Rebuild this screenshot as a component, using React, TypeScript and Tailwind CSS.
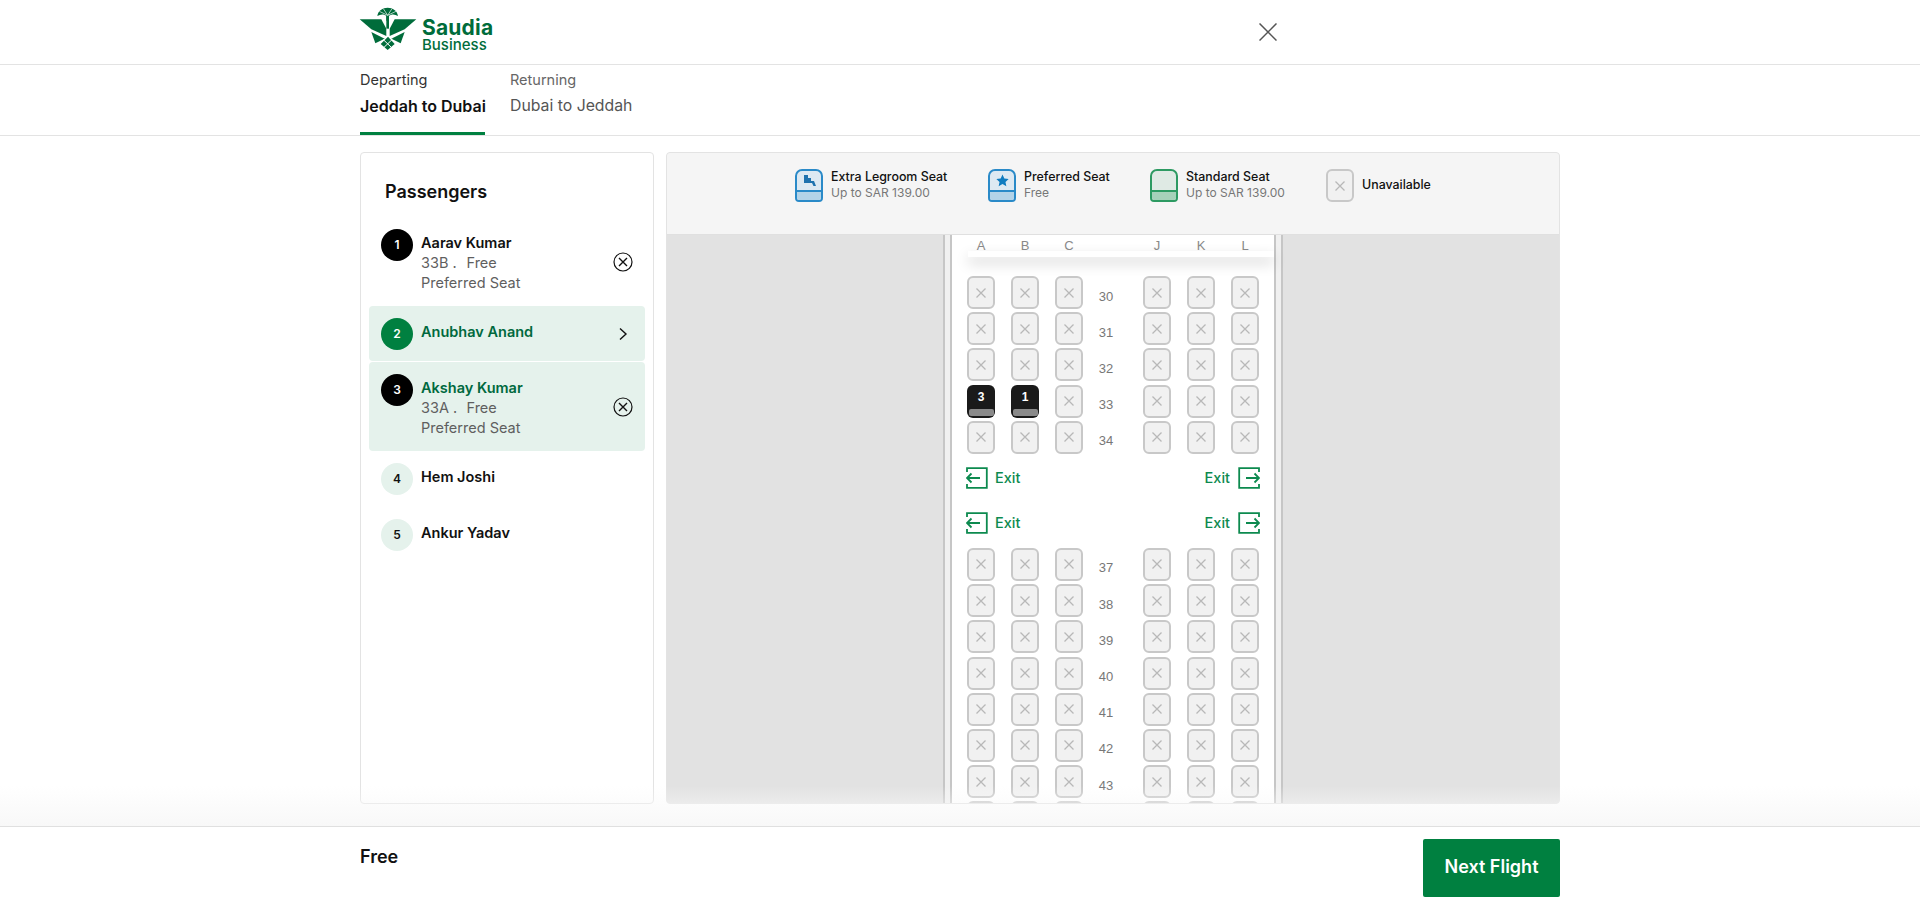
import React from "react";

const font = { fontFamily: "Inter, 'Liberation Sans', sans-serif" };
const arial = { fontFamily: "'Liberation Sans', sans-serif" };

function Logo() {
  return (
    <div className="flex items-start">
      <svg width="60" height="46" viewBox="0 0 180 138" className="-ml-[2px] -mt-[3px] shrink-0">
        <g fill="#006c3b">
          <path d="M58 30 C60 14 74 5 89 5 C104 5 118 14 120 30 C110 24 100 24 93 30 L93 44 L85 44 L85 30 C78 24 68 24 58 30 Z" />
          <rect x="85" y="30" width="8" height="38" />
          <path d="M5 40 L70 40 L85 68 L85 90 L40 70 Z" />
          <path d="M175 40 L110 40 L95 68 L95 90 L140 70 Z" />
          <path d="M40 78 L80 98 L52 112 Z" />
          <path d="M140 78 L100 98 L128 112 Z" />
          <path d="M90 92 L68 114 L89 132 L110 114 Z" />
        </g>
        <path d="M89 28 L64 16 M89 28 L76 8 M89 28 L102 8 M89 28 L114 16" stroke="#fff" strokeWidth="2" fill="none" />
        <path d="M75 100 L102 126 M103 100 L76 126" stroke="#fff" strokeWidth="3" />
      </svg>
      <div className="ml-1 mt-[10px] flex flex-col text-[#006c3b]">
        <span className="text-[21px] leading-[18px] font-bold tracking-[0.2px]">Saudia</span>
        <span className="text-[15px] leading-4 font-medium">Business</span>
      </div>
    </div>
  );
}

function CircleX() {
  return (
    <svg width="20" height="20" viewBox="0 0 20 20" fill="none" stroke="#111" strokeWidth="1.2">
      <circle cx="10" cy="10" r="9" />
      <path d="M6 6 L14 14 M14 6 L6 14" strokeWidth="1.4" />
    </svg>
  );
}

function Passenger({
  n,
  name,
  seat,
  tone,
  active,
  action,
  cls,
}: {
  n: number;
  name: string;
  seat?: string;
  tone: "black" | "green" | "pale";
  active?: boolean;
  action?: "x" | "chev";
  cls: string;
}) {
  const circle =
    tone === "black"
      ? "bg-black text-white"
      : tone === "green"
        ? "bg-[#008040] text-white"
        : "bg-[#e5f2ec] text-[#111]";
  return (
    <div className={`flex rounded-[4px] px-3 ${cls}`}>
      <div className={`mt-3 flex h-8 w-8 shrink-0 items-center justify-center rounded-full text-[12px] font-semibold ${circle}`}>
        {n}
      </div>
      <div className="ml-2 mt-4 flex-1">
        <div className={`text-[14.5px] leading-5 font-semibold ${active ? "text-[#00693e]" : "text-[#111]"}`}>{name}</div>
        {seat && (
          <div className="text-[14.5px] leading-5 text-[#5f5f5f]">
            <div className="flex">
              <span className="w-[45.5px] shrink-0 whitespace-nowrap">{seat} .</span>
              <span>Free</span>
            </div>
            <div>Preferred Seat</div>
          </div>
        )}
      </div>
      {action === "x" && (
        <div className="mt-[35px]">
          <CircleX />
        </div>
      )}
      {action === "chev" && (
        <svg width="20" height="20" viewBox="0 0 20 20" fill="none" stroke="#111" strokeWidth="1.4" className="mt-[18px]">
          <path d="M7 4.5 L13 10 L7 15.5" />
        </svg>
      )}
    </div>
  );
}

function LegendSeat({ border, fill, base, children }: { border: string; fill: string; base: string; children?: React.ReactNode }) {
  return (
    <div className={`flex h-[33px] w-[28px] shrink-0 flex-col overflow-hidden rounded-t-[7px] rounded-b-[4px] border-2 ${border} ${fill}`}>
      <div className="flex flex-1 items-center justify-center">{children}</div>
      <div className={`h-[10px] border-t-2 ${border} ${base}`} />
    </div>
  );
}

function Legend({ title, sub, seat, cls }: { title: string; sub: string; seat: React.ReactNode; cls: string }) {
  return (
    <div className={`flex items-start gap-2 ${cls}`}>
      {seat}
      <div className="text-[12px] leading-4">
        <div className="text-[12.4px] font-medium whitespace-nowrap text-[#111]">{title}</div>
        <div className="whitespace-nowrap text-[#777]">{sub}</div>
      </div>
    </div>
  );
}

function SeatX() {
  return (
    <div className="flex h-[33px] w-[28px] items-center justify-center rounded-[6px] border-2 border-[#c8c8c8] bg-[#f1f1f1]">
      <svg width="12" height="12" viewBox="0 0 12 12" stroke="#b8b8b8" strokeWidth="1.3">
        <path d="M1.5 1.5 L10.5 10.5 M10.5 1.5 L1.5 10.5" />
      </svg>
    </div>
  );
}

function SeatTaken({ n }: { n: number }) {
  return (
    <div className="flex h-[33px] w-[28px] flex-col items-center rounded-[6px] bg-[#1a1a1a] p-[1px]">
      <div className="flex-1 pt-[1px] text-[12px] leading-5 font-bold text-white" style={arial}>
        {n}
      </div>
      <div className="mb-[1px] h-[7px] w-[25px] rounded-[2px] bg-[#8a8a8a]" />
    </div>
  );
}

function Row({ n, taken }: { n?: number; taken?: Record<number, number> }) {
  return (
    <div className="flex h-[36.2px] shrink-0">
      <div className="flex gap-4">
        {[0, 1, 2].map((i) => (
          <div key={i}>{taken && taken[i] ? <SeatTaken n={taken[i]} /> : <SeatX />}</div>
        ))}
      </div>
      <div className="mr-[14px] w-[46px] pt-[13.5px] text-center text-[13px] leading-[14px] text-[#777]" style={arial}>
        {n}
      </div>
      <div className="flex gap-4">
        {[0, 1, 2].map((i) => (
          <SeatX key={i} />
        ))}
      </div>
    </div>
  );
}

function ExitIcon({ flip }: { flip?: boolean }) {
  return (
    <svg width="22" height="22" viewBox="0 0 22 22" fill="none" stroke="#0d8a4f" strokeWidth="1.8" className={flip ? "-scale-x-100" : ""}>
      <path d="M1 5 V1.2 H20.8 V20.8 H1 V17" />
      <path d="M1 11 H14 M5.5 6.5 L1 11 L5.5 15.5" />
    </svg>
  );
}

function ExitRow({ cls }: { cls: string }) {
  return (
    <div className={`-ml-[1px] flex w-[294px] items-center justify-between ${cls}`}>
      <div className="flex items-center gap-[7px]">
        <ExitIcon />
        <span className="text-[14.5px] font-medium text-[#0d8a4f]">Exit</span>
      </div>
      <div className="flex items-center gap-2">
        <span className="text-[14.5px] font-medium text-[#0d8a4f]">Exit</span>
        <ExitIcon flip />
      </div>
    </div>
  );
}

export default function App() {
  return (
    <div className="relative flex h-[911px] w-full flex-col overflow-hidden bg-white" style={font}>
      <header className="flex h-[65px] shrink-0 justify-center border-b border-[#e3e3e3]">
        <div className="flex w-[1200px] items-start pt-[9px]">
          <Logo />
          <svg width="18" height="18" viewBox="0 0 18 18" stroke="#555" strokeWidth="1.5" className="mr-[283px] ml-auto mt-[14px]">
            <path d="M0.5 0.5 L17.5 17.5 M17.5 0.5 L0.5 17.5" />
          </svg>
        </div>
      </header>

      <nav className="flex h-[71px] shrink-0 justify-center border-b border-[#e3e3e3]">
        <div className="flex w-[1200px] gap-[25px]">
          <div className="flex h-[70px] w-[125px] flex-col border-b-[3px] border-[#008040] pt-[5px]">
            <span className="text-[14.5px] leading-5 text-[#333]">Departing</span>
            <span className="mt-1 text-[16px] leading-6 font-semibold whitespace-nowrap text-[#111]">Jeddah to Dubai</span>
          </div>
          <div className="flex flex-col pt-[5px]">
            <span className="text-[14.5px] leading-5 text-[#666]">Returning</span>
            <span className="mt-1 text-[15.8px] leading-6 text-[#555]">Dubai to Jeddah</span>
          </div>
        </div>
      </nav>

      <main className="flex flex-1 justify-center overflow-hidden pt-4">
        <div className="flex w-[1200px] gap-3 pb-[22px]">
          <aside className="w-[294px] shrink-0 rounded-[4px] border border-[#e3e3e3] bg-white px-2 pt-[27px]">
            <h2 className="mb-[13px] pl-4 text-[18px] leading-6 font-semibold text-[#111]">Passengers</h2>
            <div className="flex flex-col">
              <Passenger n={1} name="Aarav Kumar" seat="33B" tone="black" action="x" cls="h-[89px]" />
              <Passenger n={2} name="Anubhav Anand" tone="green" active action="chev" cls="h-[55px] bg-[#e5f2ec]" />
              <Passenger n={3} name="Akshay Kumar" seat="33A" tone="black" active action="x" cls="mt-[1px] h-[89px] bg-[#e5f2ec]" />
              <Passenger n={4} name="Hem Joshi" tone="pale" cls="h-[56px]" />
              <Passenger n={5} name="Ankur Yadav" tone="pale" cls="h-[56px]" />
            </div>
          </aside>

          <section className="flex min-w-0 flex-1 flex-col overflow-hidden rounded-[4px] border border-[#e3e3e3] bg-[#e2e2e2]">
            <div className="flex h-[82px] shrink-0 items-start border-b border-[#e0e0e0] bg-[#f5f5f5] pl-[128px] pt-4">
              <Legend
                cls="w-[152px]"
                title="Extra Legroom Seat"
                sub="Up to SAR 139.00"
                seat={
                  <LegendSeat border="border-[#2a8ac8]" fill="bg-[#dde9f2]" base="bg-[#b3d3e8]">
                    <svg width="13" height="11" viewBox="0 0 13 11" fill="#1f72ae">
                      <path d="M1 0 H5 V3 H8 V6 H11 L13 11 H10.5 L9 8 H1 Z" />
                    </svg>
                  </LegendSeat>
                }
              />
              <Legend
                cls="ml-[41px] w-[122px]"
                title="Preferred Seat"
                sub="Free"
                seat={
                  <LegendSeat border="border-[#2a8ac8]" fill="bg-[#dde9f2]" base="bg-[#b3d3e8]">
                    <svg width="13" height="13" viewBox="0 0 24 24" fill="#0f7cc0">
                      <path d="M12 1 L15.4 8.3 L23.4 9.2 L17.5 14.6 L19.1 22.5 L12 18.5 L4.9 22.5 L6.5 14.6 L0.6 9.2 L8.6 8.3 Z" />
                    </svg>
                  </LegendSeat>
                }
              />
              <Legend
                cls="ml-10 w-[136px]"
                title="Standard Seat"
                sub="Up to SAR 139.00"
                seat={<LegendSeat border="border-[#2d9a62]" fill="bg-[#dfeae4]" base="bg-[#a6d1b9]" />}
              />
              <div className="ml-10 flex h-[33px] items-center gap-2">
                <SeatX />
                <span className="text-[12.4px] font-medium text-[#111]">Unavailable</span>
              </div>
            </div>

            <div className="flex justify-center overflow-hidden">
              <div className="w-[340px] shrink-0 border-x-2 border-[#c6c6c6] bg-[#f0f0f0] px-[5px]">
                <div className="relative h-full border-x-2 border-[#c6c6c6] bg-white pl-[15px]">
                  <div className="relative z-10 flex h-[21px] items-center text-[13px] text-[#888]" style={arial}>
                    <div className="flex gap-4">
                      {["A", "B", "C"].map((l) => (
                        <span key={l} className="w-7 text-center">{l}</span>
                      ))}
                    </div>
                    <span className="mr-[14px] w-[46px]" />
                    <div className="flex gap-4">
                      {["J", "K", "L"].map((l) => (
                        <span key={l} className="w-7 text-center">{l}</span>
                      ))}
                    </div>
                  </div>
                  <div className="absolute left-[16px] right-0 top-[16px] h-[6px] bg-white shadow-[0_6px_14px_rgba(0,0,0,0.2)]" />
                  <div className="mt-5 flex flex-col">
                    {[30, 31, 32].map((n) => (
                      <Row key={n} n={n} />
                    ))}
                    <Row n={33} taken={{ 0: 3, 1: 1 }} />
                    <Row n={34} />
                    <ExitRow cls="mt-[10px] h-[22px]" />
                    <ExitRow cls="mt-[23px] h-[22px]" />
                    <div className="mt-[14px] flex flex-col">
                      {[37, 38, 39, 40, 41, 42, 43].map((n) => (
                        <Row key={n} n={n} />
                      ))}
                      <Row />
                    </div>
                  </div>
                </div>
              </div>
            </div>
          </section>
        </div>
      </main>

      <div className="pointer-events-none absolute bottom-[85px] left-0 right-0 h-[40px] bg-gradient-to-b from-[rgba(255,255,255,0)] to-[#f8f8f8]" />

      <footer className="flex h-[85px] shrink-0 justify-center border-t border-[#e0e0e0] bg-white">
        <div className="flex w-[1200px] items-start justify-between pt-3">
          <span className="mt-[6px] text-[18px] leading-6 font-semibold text-[#111]">Free</span>
          <button className="h-[58px] w-[137px] rounded-[2px] bg-[#008040] pb-[3px] text-[18px] font-semibold text-white">Next Flight</button>
        </div>
      </footer>
    </div>
  );
}
